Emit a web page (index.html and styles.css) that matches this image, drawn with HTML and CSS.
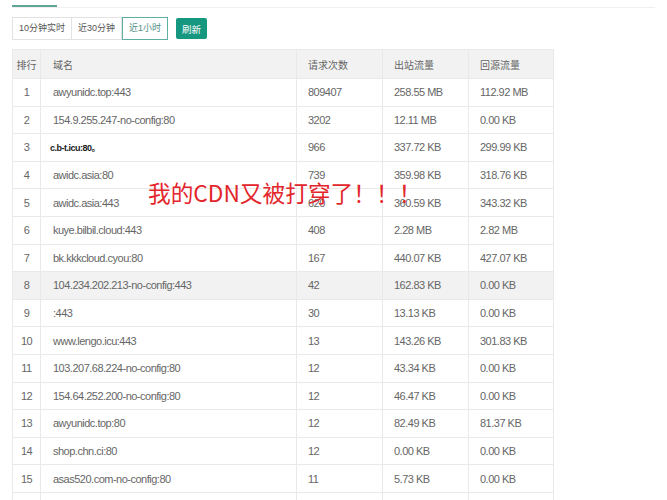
FILE: index.html
```html
<!DOCTYPE html>
<html lang="zh-CN">
<head>
<meta charset="utf-8">
<title>CDN 域名排行</title>
<link rel="stylesheet" href="styles.css">
</head>
<body>
<div class="page">
  <div class="tabs"><div class="tab-active"></div></div>
  <div class="toolbar">
    <div class="seg">
      <button class="seg-btn">10分钟实时</button>
      <button class="seg-btn">近30分钟</button>
      <button class="seg-btn seg-on">近1小时</button>
    </div>
    <button class="btn-primary">刷新</button>
  </div>
  <table class="rank">
    <colgroup>
      <col class="c-rank"><col class="c-domain"><col class="c-num"><col class="c-num"><col class="c-last">
    </colgroup>
    <thead>
      <tr><th class="center">排行</th><th>域名</th><th>请求次数</th><th>出站流量</th><th>回源流量</th></tr>
    </thead>
    <tbody>
      <tr><td class="center">1</td><td>awyunidc.top:443</td><td>809407</td><td>258.55 MB</td><td>112.92 MB</td></tr>
      <tr><td class="center">2</td><td>154.9.255.247-no-config:80</td><td>3202</td><td>12.11 MB</td><td>0.00 KB</td></tr>
      <tr><td class="center">3</td><td><span class="mark">c.b-t.icu:80。</span></td><td>966</td><td>337.72 KB</td><td>299.99 KB</td></tr>
      <tr><td class="center">4</td><td>awidc.asia:80</td><td>739</td><td>359.98 KB</td><td>318.76 KB</td></tr>
      <tr><td class="center">5</td><td>awidc.asia:443</td><td>620</td><td>360.59 KB</td><td>343.32 KB</td></tr>
      <tr><td class="center">6</td><td>kuye.bilbil.cloud:443</td><td>408</td><td>2.28 MB</td><td>2.82 MB</td></tr>
      <tr><td class="center">7</td><td>bk.kkkcloud.cyou:80</td><td>167</td><td>440.07 KB</td><td>427.07 KB</td></tr>
      <tr class="hover"><td class="center">8</td><td>104.234.202.213-no-config:443</td><td>42</td><td>162.83 KB</td><td>0.00 KB</td></tr>
      <tr><td class="center">9</td><td>:443</td><td>30</td><td>13.13 KB</td><td>0.00 KB</td></tr>
      <tr><td class="center">10</td><td>www.lengo.icu:443</td><td>13</td><td>143.26 KB</td><td>301.83 KB</td></tr>
      <tr><td class="center">11</td><td>103.207.68.224-no-config:80</td><td>12</td><td>43.34 KB</td><td>0.00 KB</td></tr>
      <tr><td class="center">12</td><td>154.64.252.200-no-config:80</td><td>12</td><td>46.47 KB</td><td>0.00 KB</td></tr>
      <tr><td class="center">13</td><td>awyunidc.top:80</td><td>12</td><td>82.49 KB</td><td>81.37 KB</td></tr>
      <tr><td class="center">14</td><td>shop.chn.ci:80</td><td>12</td><td>0.00 KB</td><td>0.00 KB</td></tr>
      <tr><td class="center">15</td><td>asas520.com-no-config:80</td><td>11</td><td>5.73 KB</td><td>0.00 KB</td></tr>
      <tr><td class="center">&nbsp;</td><td>&nbsp;</td><td>&nbsp;</td><td>&nbsp;</td><td>&nbsp;</td></tr>
    </tbody>
  </table>
  <div class="overlay-note">我的CDN又被打穿了！！！</div>
</div>
</body>
</html>
```

FILE: styles.css
```css
html, body {
  margin: 0;
  padding: 0;
  background: #ffffff;
}

.page {
  position: relative;
  padding: 0 12px;
  font-family: "Liberation Sans", "Noto Sans CJK SC", sans-serif;
  color: #666666;
}

.tabs {
  height: 2px;
  padding-top: 5px;
  border-bottom: 1px solid #f0f0f0;
}

.tab-active {
  width: 45px;
  height: 2px;
  background: #5ea597;
}

.toolbar {
  display: flex;
  align-items: center;
  gap: 8px;
  margin-top: 9px;
  height: 23px;
}

.seg {
  display: flex;
  height: 23px;
}

.seg-btn {
  height: 23px;
  margin: 0;
  padding: 0 6px;
  border: 1px solid #e2e2e2;
  border-left-width: 0;
  background: #ffffff;
  color: #555555;
  font-family: "Liberation Sans", "Noto Sans CJK SC", sans-serif;
  font-size: 9px;
  line-height: 21px;
}

.seg-btn:first-child {
  border-left-width: 1px;
}

.seg-btn.seg-on {
  border: 1px solid #5fb0a3;
  color: #4f8d83;
}

.btn-primary {
  height: 21px;
  margin: 0;
  padding: 0 6px;
  border: 0;
  border-radius: 2px;
  background: #16977f;
  color: #ffffff;
  font-family: "Noto Sans CJK SC", sans-serif;
  font-size: 9.5px;
}

.rank {
  margin-top: 9px;
  width: 541px;
  table-layout: fixed;
  border-collapse: collapse;
  border: 1px solid #e6e6e6;
  font-size: 11px;
  letter-spacing: -0.5px;
}

.c-rank { width: 28px; }
.c-domain { width: 256px; }
.c-num { width: 86px; }
.c-last { width: 85px; }

.rank th,
.rank td {
  border: 1px solid #e9e9e9;
  padding: 0 0 0 11px;
  text-align: left;
  white-space: nowrap;
  overflow: hidden;
}

.rank th {
  height: 28px;
  background: #f2f2f2;
  font-family: "Noto Sans CJK SC", sans-serif;
  font-weight: normal;
  font-size: 10px;
  letter-spacing: 0;
  color: #666666;
}

.rank td {
  height: 26.6px;
}

.rank td:nth-child(2),
.rank th:nth-child(2) {
  padding-left: 12px;
}

.rank .center {
  text-align: center;
  padding: 0;
}

.rank tr.hover td {
  background: #f2f2f2;
}

.mark {
  margin-left: -3px;
  font-weight: bold;
  font-size: 9px;
  letter-spacing: -0.5px;
  color: #1a1a1a;
}

.overlay-note {
  position: absolute;
  left: 148px;
  top: 181px;
  font-family: "Noto Sans CJK SC", sans-serif;
  font-size: 22.7px;
  line-height: 24px;
  color: #e3262b;
  white-space: nowrap;
}
```
